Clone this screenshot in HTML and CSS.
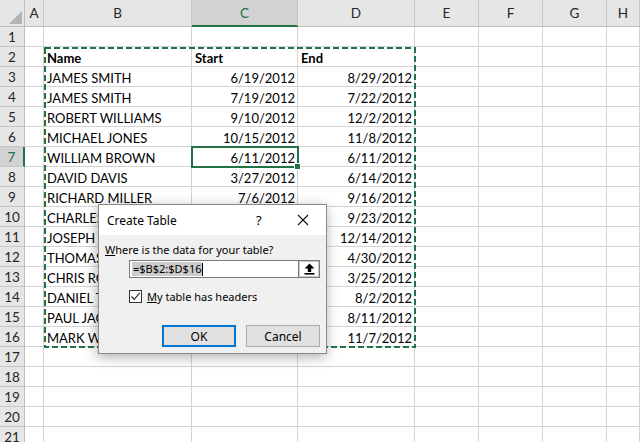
FILE: index.html
```html
<!DOCTYPE html>
<html>
<head>
<meta charset="utf-8">
<link rel="stylesheet" href="styles.css">
</head>
<body>
<div class="app">
  <div class="sheet">
    <div class="corner"><svg width="25" height="27" viewBox="0 0 25 27"><polygon points="22,11 22,24 9,24" fill="#b4b4b4"/></svg></div>
    <div class="ch">A</div><div class="ch">B</div><div class="ch ch-sel">C</div><div class="ch">D</div><div class="ch">E</div><div class="ch">F</div><div class="ch">G</div><div class="ch">H</div>

    <div class="rh">1</div><div class="c"></div><div class="c"></div><div class="c"></div><div class="c"></div><div class="c"></div><div class="c"></div><div class="c"></div><div class="c"></div>
    <div class="rh">2</div><div class="c"></div><div class="c b">Name</div><div class="c b">Start</div><div class="c b">End</div><div class="c"></div><div class="c"></div><div class="c"></div><div class="c"></div>
    <div class="rh">3</div><div class="c"></div><div class="c">JAMES SMITH</div><div class="c r">6/19/2012</div><div class="c r">8/29/2012</div><div class="c"></div><div class="c"></div><div class="c"></div><div class="c"></div>
    <div class="rh">4</div><div class="c"></div><div class="c">JAMES SMITH</div><div class="c r">7/19/2012</div><div class="c r">7/22/2012</div><div class="c"></div><div class="c"></div><div class="c"></div><div class="c"></div>
    <div class="rh">5</div><div class="c"></div><div class="c">ROBERT WILLIAMS</div><div class="c r">9/10/2012</div><div class="c r">12/2/2012</div><div class="c"></div><div class="c"></div><div class="c"></div><div class="c"></div>
    <div class="rh">6</div><div class="c"></div><div class="c">MICHAEL JONES</div><div class="c r">10/15/2012</div><div class="c r">11/8/2012</div><div class="c"></div><div class="c"></div><div class="c"></div><div class="c"></div>
    <div class="rh rh-sel">7</div><div class="c"></div><div class="c">WILLIAM BROWN</div><div class="c r">6/11/2012</div><div class="c r">6/11/2012</div><div class="c"></div><div class="c"></div><div class="c"></div><div class="c"></div>
    <div class="rh">8</div><div class="c"></div><div class="c">DAVID DAVIS</div><div class="c r">3/27/2012</div><div class="c r">6/14/2012</div><div class="c"></div><div class="c"></div><div class="c"></div><div class="c"></div>
    <div class="rh">9</div><div class="c"></div><div class="c">RICHARD MILLER</div><div class="c r">7/6/2012</div><div class="c r">9/16/2012</div><div class="c"></div><div class="c"></div><div class="c"></div><div class="c"></div>
    <div class="rh">10</div><div class="c"></div><div class="c">CHARLES WILSON</div><div class="c r">8/14/2012</div><div class="c r">9/23/2012</div><div class="c"></div><div class="c"></div><div class="c"></div><div class="c"></div>
    <div class="rh">11</div><div class="c"></div><div class="c">JOSEPH MOORE</div><div class="c r">10/2/2012</div><div class="c r">12/14/2012</div><div class="c"></div><div class="c"></div><div class="c"></div><div class="c"></div>
    <div class="rh">12</div><div class="c"></div><div class="c">THOMAS TAYLOR</div><div class="c r">2/12/2012</div><div class="c r">4/30/2012</div><div class="c"></div><div class="c"></div><div class="c"></div><div class="c"></div>
    <div class="rh">13</div><div class="c"></div><div class="c">CHRIS ROBERTS</div><div class="c r">1/18/2012</div><div class="c r">3/25/2012</div><div class="c"></div><div class="c"></div><div class="c"></div><div class="c"></div>
    <div class="rh">14</div><div class="c"></div><div class="c">DANIEL THOMAS</div><div class="c r">6/3/2012</div><div class="c r">8/2/2012</div><div class="c"></div><div class="c"></div><div class="c"></div><div class="c"></div>
    <div class="rh">15</div><div class="c"></div><div class="c">PAUL JACKSON</div><div class="c r">7/21/2012</div><div class="c r">8/11/2012</div><div class="c"></div><div class="c"></div><div class="c"></div><div class="c"></div>
    <div class="rh">16</div><div class="c"></div><div class="c">MARK WHITE</div><div class="c r">9/9/2012</div><div class="c r">11/7/2012</div><div class="c"></div><div class="c"></div><div class="c"></div><div class="c"></div>
    <div class="rh">17</div><div class="c"></div><div class="c"></div><div class="c"></div><div class="c"></div><div class="c"></div><div class="c"></div><div class="c"></div><div class="c"></div>
    <div class="rh">18</div><div class="c"></div><div class="c"></div><div class="c"></div><div class="c"></div><div class="c"></div><div class="c"></div><div class="c"></div><div class="c"></div>
    <div class="rh">19</div><div class="c"></div><div class="c"></div><div class="c"></div><div class="c"></div><div class="c"></div><div class="c"></div><div class="c"></div><div class="c"></div>
    <div class="rh">20</div><div class="c"></div><div class="c"></div><div class="c"></div><div class="c"></div><div class="c"></div><div class="c"></div><div class="c"></div><div class="c"></div>
    <div class="rh">21</div><div class="c"></div><div class="c"></div><div class="c"></div><div class="c"></div><div class="c"></div><div class="c"></div><div class="c"></div><div class="c"></div>
  </div>

  <svg class="ants" width="372" height="301" viewBox="0 0 372 301"><rect x="1" y="1" width="370" height="299" fill="none" stroke="#217346" stroke-width="2" stroke-dasharray="6 3"/></svg>
  <div class="active-cell"><span class="handle"></span></div>

  <div class="dialog">
    <div class="dlg-title">
      <span class="dlg-name">Create Table</span>
      <span class="dlg-help">?</span>
      <svg class="dlg-close" width="12" height="12" viewBox="0 0 12 12"><path d="M1 1 L11 11 M11 1 L1 11" stroke="#111" stroke-width="1.1" fill="none"/></svg>
    </div>
    <div class="dlg-body">
      <div class="dlg-label"><u>W</u>here is the data for your table?</div>
      <div class="refedit">
        <div class="ref-input"><span class="ref-sel">=$B$2:$D$16</span><span class="caret"></span></div>
        <div class="ref-btn"><svg width="11" height="12" viewBox="0 0 11 12"><path d="M5.5 0.5 L10.5 5.5 L7.2 5.5 L7.2 9 L3.8 9 L3.8 5.5 L0.5 5.5 Z" fill="#000"/><rect x="0.5" y="10" width="10" height="1.6" fill="#000"/></svg></div>
      </div>
      <label class="chk-row"><span class="chk"><svg width="11" height="11" viewBox="0 0 11 11"><path d="M1.5 5.5 L4.2 8.3 L9.8 1.8" stroke="#333" stroke-width="1.3" fill="none"/></svg></span><span><u>M</u>y table has headers</span></label>
      <div class="dlg-buttons">
        <div class="btn btn-ok">OK</div>
        <div class="btn">Cancel</div>
      </div>
    </div>
  </div>
</div>
</body>
</html>
```
FILE: styles.css
```css
html, body {
  margin: 0;
  padding: 0;
  background: #fff;
  overflow: hidden;
}
.app {
  position: relative;
  width: 640px;
  height: 442px;
  overflow: hidden;
  font-family: "Lato", "Liberation Sans", sans-serif;
  font-size: 13px;
  color: #000;
}
.sheet {
  display: grid;
  grid-template-columns: 25px 19px 148px 106px 117px 64px 64px 64px 33px;
  grid-template-rows: 27px;
  grid-auto-rows: 20px;
}
.corner {
  background: #e6e6e6;
  border-right: 1px solid #bdbdbd;
  border-bottom: 1px solid #bdbdbd;
  box-sizing: border-box;
  line-height: 0;
}
.ch {
  background: #e6e6e6;
  border-right: 1px solid #c6c6c6;
  border-bottom: 1px solid #bdbdbd;
  box-sizing: border-box;
  display: flex;
  align-items: center;
  justify-content: center;
  color: #262626;
  font-size: 13.5px;
}
.ch-sel {
  background: #d2d2d2;
  border-bottom: 2px solid #217346;
  color: #217346;
}
.rh {
  background: #e6e6e6;
  border-right: 1px solid #bdbdbd;
  border-bottom: 1px solid #c6c6c6;
  box-sizing: border-box;
  display: flex;
  align-items: center;
  justify-content: center;
  color: #262626;
  font-size: 13.5px;
  padding-top: 1px;
}
.rh-sel {
  background: #d2d2d2;
  border-right: 2px solid #217346;
  color: #217346;
}
.c {
  border-right: 1px solid #d4d4d4;
  border-bottom: 1px solid #d4d4d4;
  box-sizing: border-box;
  padding: 3px 2px 0 3px;
  white-space: nowrap;
  overflow: hidden;
  line-height: 17px;
  font-size: 13px;
}
.b { font-weight: bold; }
.r { text-align: right; }

.ants {
  position: absolute;
  left: 44px;
  top: 47px;
}
.active-cell {
  position: absolute;
  left: 191px;
  top: 146px;
  width: 108px;
  height: 22px;
  box-sizing: border-box;
  border: 2px solid #217346;
}
.handle {
  position: absolute;
  right: -4px;
  bottom: -4px;
  width: 5px;
  height: 5px;
  background: #217346;
  border: 1px solid #fff;
}

.dialog {
  position: absolute;
  left: 98px;
  top: 204px;
  width: 229px;
  height: 150px;
  box-sizing: border-box;
  border: 1px solid #8a8a8a;
  background: #f0f0f0;
  box-shadow: -1px 3px 12px rgba(0,0,0,0.32);
  font-family: "Noto Sans", "Open Sans", sans-serif;
  font-size: 11px;
  color: #000;
  display: flex;
  flex-direction: column;
}
.dlg-title {
  height: 30px;
  background: #fff;
  display: flex;
  align-items: center;
  padding-left: 8px;
  flex-shrink: 0;
}
.dlg-name {
  flex: 1;
  font-size: 12px;
}
.dlg-help {
  width: 12px;
  margin-right: 29px;
  font-size: 13px;
}
.dlg-close {
  margin-right: 17px;
}
.dlg-body {
  padding: 5px 6px 0 6px;
  display: flex;
  flex-direction: column;
}
.dlg-label {
  height: 18px;
  line-height: 18px;
  font-size: 11px;
  margin-top: 1px;
}
.refedit {
  display: flex;
  margin-left: 24px;
  margin-top: 1px;
  height: 18px;
  width: 191px;
}
.ref-input {
  flex: 1;
  background: #fff;
  border: 1px solid #7a7a7a;
  border-right: none;
  box-sizing: border-box;
  display: flex;
  align-items: center;
  padding-left: 2px;
}
.ref-sel {
  background: #cccccc;
  line-height: 14px;
  font-size: 11px;
  padding: 0 1px;
}
.caret {
  width: 1px;
  height: 13px;
  background: #000;
}
.ref-btn {
  width: 22px;
  box-sizing: border-box;
  border: 2px solid #c8c8c8;
  background: #fff;
  display: flex;
  align-items: center;
  justify-content: center;
  outline: 1px solid #7a7a7a;
  outline-offset: -1px;
}
.chk-row {
  display: flex;
  align-items: center;
  margin-left: 24px;
  margin-top: 11px;
  height: 14px;
}
.chk {
  width: 13px;
  height: 13px;
  box-sizing: border-box;
  border: 1px solid #333;
  background: #fff;
  display: flex;
  align-items: center;
  justify-content: center;
  margin-right: 5px;
}
.dlg-buttons {
  display: flex;
  gap: 10px;
  margin-left: 57px;
  margin-top: 22px;
}
.btn {
  width: 74px;
  height: 22px;
  box-sizing: border-box;
  border: 1px solid #adadad;
  background: #e1e1e1;
  display: flex;
  align-items: center;
  justify-content: center;
  font-size: 12px;
}
.btn-ok {
  border: 2px solid #0078d7;
}
```
